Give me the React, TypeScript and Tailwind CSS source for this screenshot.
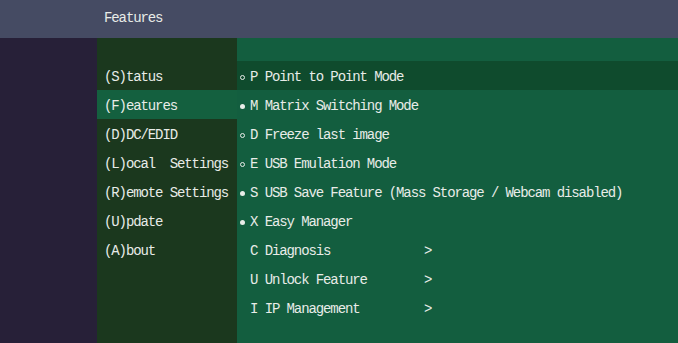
import React from 'react';

const leftItems = [
  '(S)tatus',
  '(F)eatures',
  '(D)DC/EDID',
  '(L)ocal  Settings',
  '(R)emote Settings',
  '(U)pdate',
  '(A)bout',
];

type Feature = { key: string; label: string; bullet: 'on' | 'off' | 'none'; sub?: boolean };

const features: Feature[] = [
  { key: 'P', label: 'Point to Point Mode', bullet: 'off' },
  { key: 'M', label: 'Matrix Switching Mode', bullet: 'on' },
  { key: 'D', label: 'Freeze last image', bullet: 'off' },
  { key: 'E', label: 'USB Emulation Mode', bullet: 'off' },
  { key: 'S', label: 'USB Save Feature (Mass Storage / Webcam disabled)', bullet: 'on' },
  { key: 'X', label: 'Easy Manager', bullet: 'on' },
  { key: 'C', label: 'Diagnosis', bullet: 'none', sub: true },
  { key: 'U', label: 'Unlock Feature', bullet: 'none', sub: true },
  { key: 'I', label: 'IP Management', bullet: 'none', sub: true },
];

const mono = "font-['Liberation_Mono',monospace] text-[14px] tracking-[-1.1px] whitespace-pre";

export default function App() {
  return (
    <div className={`w-[678px] h-[343px] flex flex-col bg-[#272038] text-[#e8ece8] ${mono}`}>
      <div className="h-[38px] shrink-0 bg-[#454b63] pl-[104px] leading-[36px]">Features</div>
      <div className="flex flex-1">
        <div className="w-[97px]" />
        <div className="w-[140px] bg-[#1b381e] pt-[23px]">
          {leftItems.map((item, i) => (
            <div
              key={item}
              className={`h-[29px] leading-[32px] pl-[7px] ${i === 1 ? 'bg-[#14603f]' : ''}`}
            >
              {item}
            </div>
          ))}
        </div>
        <div className="flex-1 bg-[#135e3f] pt-[23px]">
          {features.map((f, i) => (
            <div
              key={f.key}
              className={`h-[29px] flex items-center pt-[3px] ${i === 0 ? 'bg-[#0f4b2d]' : ''}`}
            >
              <div className="w-[13px] flex pl-[3px]">
                {f.bullet === 'on' && <span className="w-[5px] h-[5px] rounded-full bg-[#e8ece8]" />}
                {f.bullet === 'off' && (
                  <span className="w-[5px] h-[5px] rounded-full border border-[#e8ece8]" />
                )}
              </div>
              <span className={f.sub ? 'w-[174px]' : ''}>
                {f.key} {f.label}
              </span>
              {f.sub && <span>&gt;</span>}
            </div>
          ))}
        </div>
      </div>
    </div>
  );
}
